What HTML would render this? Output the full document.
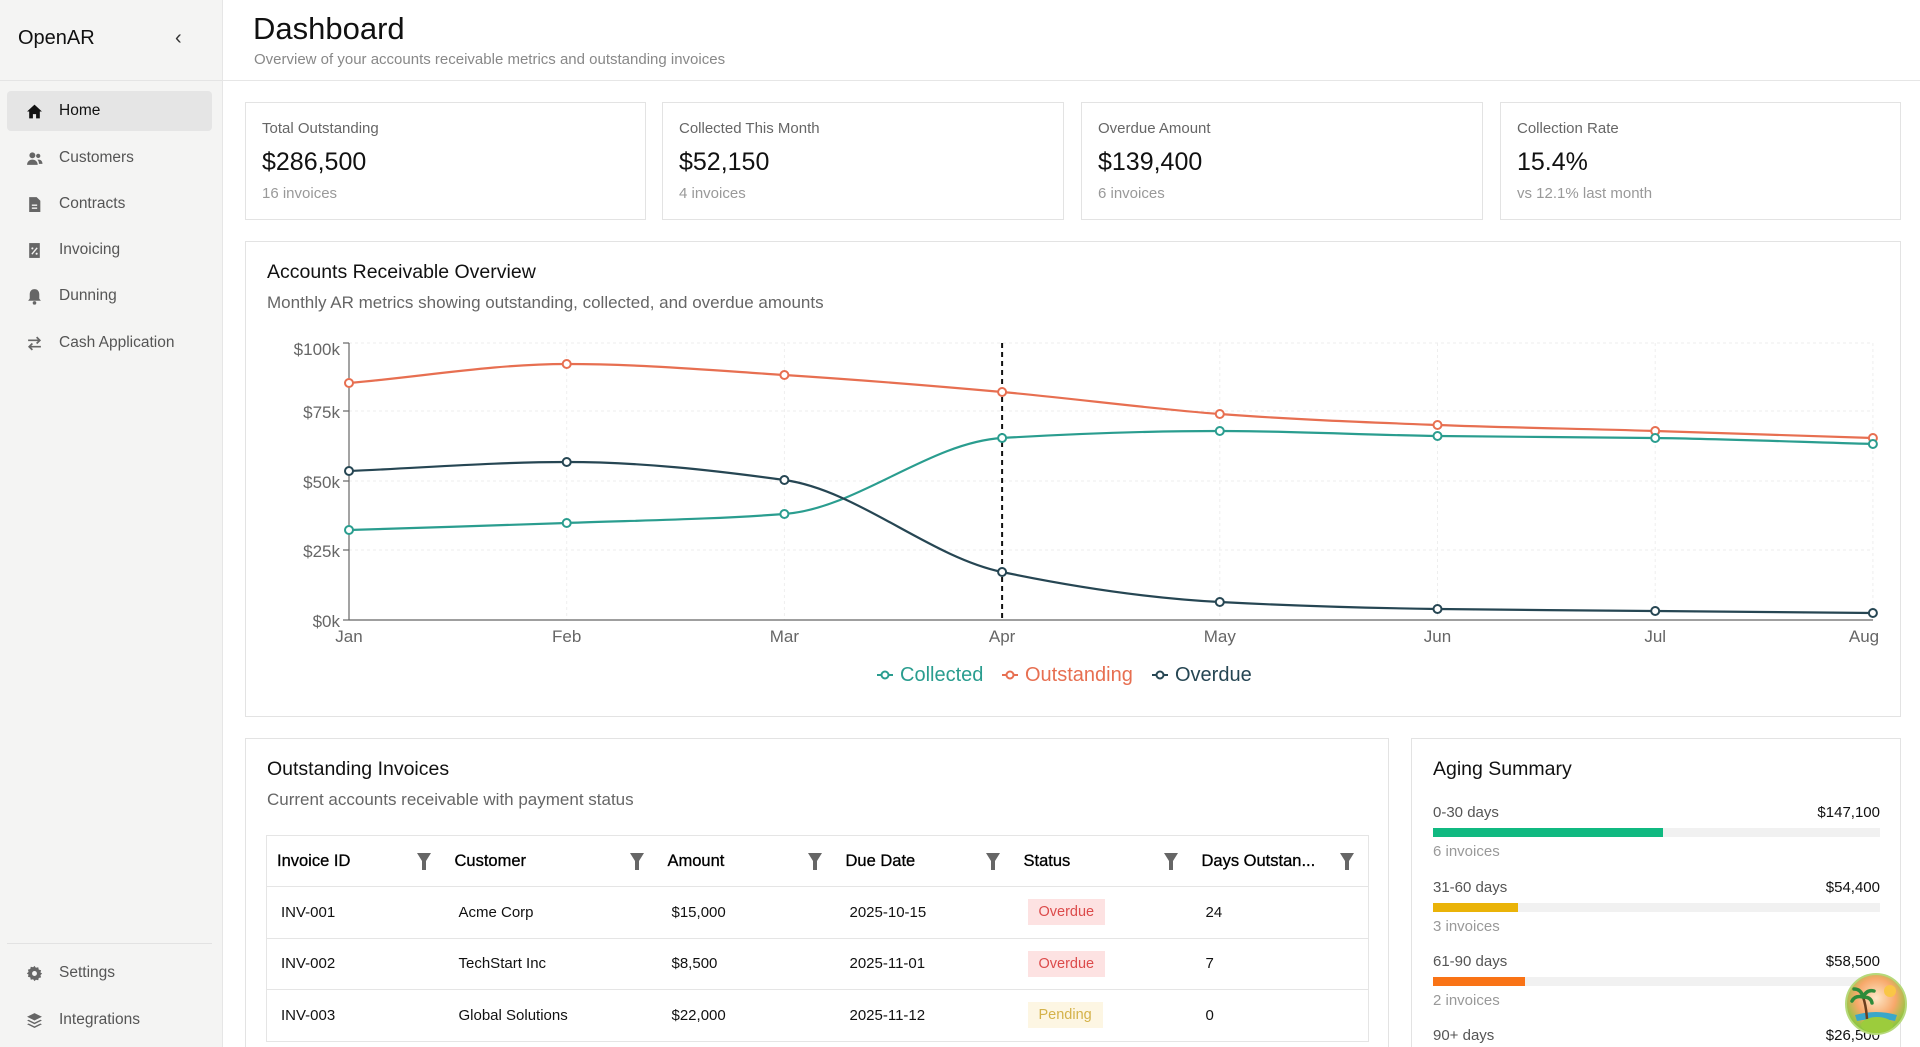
<!DOCTYPE html>
<html style="width:1920px;height:1047px;overflow:hidden"><head><meta charset="utf-8"><style>
*{box-sizing:border-box;margin:0;padding:0}
body{width:1920px;height:1047px;overflow:hidden;font-family:"Liberation Sans",sans-serif;background:#fff;color:#111;position:relative}
.sb{position:absolute;left:0;top:0;width:223px;height:1047px;background:#f4f4f3;border-right:1px solid #e6e6e6}
.logo{position:absolute;left:18px;top:27px;font-size:20px;color:#111}
.chev{position:absolute;left:175px;top:27px;font-size:20px;color:#333}
.sbline{position:absolute;left:0;right:0;top:80px;border-top:1px solid #e4e4e4}
.nav{position:absolute;left:7px;width:205px;height:40px;border-radius:4px;display:flex;align-items:center;font-size:15.5px;color:#555}
.nav.act{background:#e5e5e5;color:#111}
.nav svg{position:absolute;left:19px;width:17px;height:17px}
.nav span{position:absolute;left:52px}
.main{position:absolute;left:223px;top:0;right:0}
h1{position:absolute;left:30px;top:11px;font-size:31px;font-weight:400;color:#111}
.sub1{position:absolute;left:31px;top:51px;font-size:15px;color:#888}
.hline{position:absolute;left:223px;right:0;top:80px;border-top:1px solid #e6e6e6}
.card{position:absolute;background:#fff;border:1.5px solid #e3e3e3;overflow:hidden}
.stat .l{position:absolute;left:16px;top:17px;font-size:15px;color:#666}
.stat .v{position:absolute;left:16px;top:45px;font-size:25px;color:#111}
.stat .s{position:absolute;left:16px;top:82px;font-size:15px;color:#999}
.ct{position:absolute;left:21px;top:19px;font-size:19.5px;color:#111}
.cs{position:absolute;left:21px;top:51px;font-size:17px;color:#666}
table{position:absolute;left:20px;top:96px;width:1103px;border-collapse:collapse;border:1.5px solid #e5e5e5}
th{height:51px;text-align:left;font-weight:400;font-size:16.5px;color:#000;padding-left:10px;position:relative;border-bottom:1.5px solid #e5e5e5;-webkit-text-stroke:0.3px #000}
td{height:51.5px;font-size:15px;color:#111;padding-left:14px;border-bottom:1.5px solid #e5e5e5}
th .f{position:absolute;right:14px;top:17px;width:14px;height:17px}
.bd{display:inline-block;padding:5px 11px;font-size:14.5px}
.ov{background:#fde2e2;color:#dc4b4b}.pe{background:#fdf6e3;color:#d4b24a}
.ag{position:absolute;left:21px;width:447px}
.ag .a{font-size:15px;color:#555}.ag .b{position:absolute;right:0;top:0;font-size:15px;color:#111}
.ag .bar{margin-top:7px;height:9px;background:#f1f1f1;position:relative}
.ag .bar i{position:absolute;left:0;top:0;bottom:0}
.ag .n{margin-top:6px;font-size:15px;color:#999}
</style></head><body>
<div class="sb">
<div class="logo">OpenAR</div><div class="chev">&#8249;</div>
<div class="sbline"></div>
<div class="nav act" style="top:91px"><svg viewBox="0 0 16 16"><path d="M8 1.5L1 8h2v6.5h3.5v-4h3v4H13V8h2z" fill="#111"/></svg><span>Home</span></div>
<div class="nav" style="top:138px"><svg viewBox="0 0 16 16" fill="#666"><circle cx="6" cy="5" r="2.8"/><path d="M1 14c0-3 2-5 5-5s5 2 5 5z"/><circle cx="11.5" cy="5.5" r="2"/><path d="M12 9c2 0 3.5 1.5 3.5 4h-3.3c0-1.5-.5-3-1.5-3.8z"/></svg><span>Customers</span></div>
<div class="nav" style="top:184px"><svg viewBox="0 0 16 16" fill="#666"><path d="M3 1h7l3.5 3.5V15H3z"/><rect x="5.5" y="8" width="5" height="1.3" fill="#f4f4f3"/><rect x="5.5" y="10.8" width="5" height="1.3" fill="#f4f4f3"/></svg><span>Contracts</span></div>
<div class="nav" style="top:230px"><svg viewBox="0 0 16 16" fill="#666"><path d="M3 1h10v14H3z"/><path d="M5.5 11.5l5-6" stroke="#f4f4f3" stroke-width="1.3"/><circle cx="6" cy="6" r="1" fill="#f4f4f3"/><circle cx="10" cy="11" r="1" fill="#f4f4f3"/></svg><span>Invoicing</span></div>
<div class="nav" style="top:276px"><svg viewBox="0 0 16 16" fill="#666"><path d="M8 1c3 0 4.5 2.3 4.5 5v4l1.5 2H2l1.5-2V6C3.5 3.3 5 1 8 1z"/><circle cx="8" cy="14" r="1.7"/></svg><span>Dunning</span></div>
<div class="nav" style="top:323px"><svg viewBox="0 0 16 16" fill="none" stroke="#666" stroke-width="1.6"><path d="M2 5h11M10 2l3 3-3 3M14 11H3M6 8l-3 3 3 3"/></svg><span>Cash Application</span></div>
<div style="position:absolute;left:7px;width:205px;top:943px;border-top:1px solid #e2e2e2"></div>
<div class="nav" style="top:953px"><svg viewBox="0 0 16 16" fill="#666"><path d="M8 0.8l1.3 1.8 2.2-.5.5 2.2 2.2.6-.6 2.1L15.2 8l-1.6 1.5.6 2.1-2.2.6-.5 2.2-2.2-.5L8 15.2l-1.3-1.8-2.2.5-.5-2.2-2.2-.6.6-2.1L.8 8l1.6-1.5-.6-2.1 2.2-.6.5-2.2 2.2.5z"/><circle cx="8" cy="8" r="2.3" fill="#f4f4f3"/></svg><span>Settings</span></div>
<div class="nav" style="top:1000px"><svg viewBox="0 0 16 16" fill="#666"><path d="M8 1l7 3.5L8 8 1 4.5z"/><path d="M2.5 7.3L8 10l5.5-2.7L15 8l-7 3.5L1 8z"/><path d="M2.5 10.8L8 13.5l5.5-2.7L15 11.5 8 15l-7-3.5z"/></svg><span>Integrations</span></div>
</div>
<div class="main"><h1>Dashboard</h1><div class="sub1">Overview of your accounts receivable metrics and outstanding invoices</div></div>
<div class="hline"></div>

<div class="card stat" style="left:245px;top:102px;width:401px;height:118px"><div class="l">Total Outstanding</div><div class="v">$286,500</div><div class="s">16 invoices</div></div>
<div class="card stat" style="left:662px;top:102px;width:402px;height:118px"><div class="l">Collected This Month</div><div class="v">$52,150</div><div class="s">4 invoices</div></div>
<div class="card stat" style="left:1081px;top:102px;width:402px;height:118px"><div class="l">Overdue Amount</div><div class="v">$139,400</div><div class="s">6 invoices</div></div>
<div class="card stat" style="left:1500px;top:102px;width:401px;height:118px"><div class="l">Collection Rate</div><div class="v">15.4%</div><div class="s">vs 12.1% last month</div></div>

<div class="card" style="left:245px;top:241px;width:1656px;height:476px"><div class="ct">Accounts Receivable Overview</div><div class="cs">Monthly AR metrics showing outstanding, collected, and overdue amounts</div></div>
<svg style="position:absolute;left:0;top:0" width="1920" height="760" font-family="Liberation Sans, sans-serif">
<g stroke="#eee" stroke-dasharray="3 3"><line x1="349" x2="1873" y1="343" y2="343"/><line x1="349" x2="1873" y1="411" y2="411"/><line x1="349" x2="1873" y1="481" y2="481"/><line x1="349" x2="1873" y1="550" y2="550"/>
<line x1="566.7" x2="566.7" y1="343" y2="620"/><line x1="784.4" x2="784.4" y1="343" y2="620"/><line x1="1219.8" x2="1219.8" y1="343" y2="620"/><line x1="1437.5" x2="1437.5" y1="343" y2="620"/><line x1="1655.2" x2="1655.2" y1="343" y2="620"/><line x1="1872.9" x2="1872.9" y1="343" y2="620"/></g>
<g stroke="#666" stroke-width="1.2"><line x1="349" y1="343" x2="349" y2="620"/><line x1="349" y1="620" x2="1873" y2="620"/>
<line x1="343" x2="349" y1="343" y2="343"/><line x1="343" x2="349" y1="411" y2="411"/><line x1="343" x2="349" y1="481" y2="481"/><line x1="343" x2="349" y1="550" y2="550"/><line x1="343" x2="349" y1="620" y2="620"/></g>
<g fill="#666" font-size="17" text-anchor="end"><text x="340" y="355">$100k</text><text x="340" y="418">$75k</text><text x="340" y="488">$50k</text><text x="340" y="557">$25k</text><text x="340" y="627">$0k</text></g>
<g fill="#666" font-size="17" text-anchor="middle"><text x="349" y="642">Jan</text><text x="566.7" y="642">Feb</text><text x="784.4" y="642">Mar</text><text x="1002.1" y="642">Apr</text><text x="1219.8" y="642">May</text><text x="1437.5" y="642">Jun</text><text x="1655.2" y="642">Jul</text><text x="1864" y="642">Aug</text></g>
<line x1="1002.1" y1="343" x2="1002.1" y2="620" stroke="#111" stroke-width="2" stroke-dasharray="5 4"/>
<g fill="none" stroke-width="2.2">
<path stroke="#e76f51" d="M349,383 C421.6,376.7 494.1,364 566.7,364 C639.3,364 711.8,370.3 784.4,375 C857,379.7 929.5,385.5 1002.1,392 C1074.7,398.5 1147.2,408.5 1219.8,414 C1292.4,419.5 1364.9,422.2 1437.5,425 C1510.1,427.8 1582.6,428.7 1655.2,431 C1727.8,433.3 1800.3,435.7 1872.9,438"/>
<path stroke="#2a9d8f" d="M349,530 C421.6,527.7 494.1,525.6 566.7,523 C639.3,520.4 711.8,519.4 784.4,514 C857,508.6 929.5,442.3 1002.1,438 C1074.7,433.7 1147.2,431 1219.8,431 C1292.4,431 1364.9,435 1437.5,436 C1510.1,437 1582.6,437 1655.2,438 C1727.8,439 1800.3,442 1872.9,444"/>
<path stroke="#264653" d="M349,471 C421.6,468 494.1,462 566.7,462 C639.3,462 711.8,470 784.4,480 C857,490 929.5,556.9 1002.1,572 C1074.7,587.1 1147.2,598.2 1219.8,602 C1292.4,605.8 1364.9,608 1437.5,609 C1510.1,610 1582.6,610.3 1655.2,611 C1727.8,611.7 1800.3,612.3 1872.9,613"/>
</g>
<g fill="#fff" stroke-width="2">
<g stroke="#e76f51"><circle cx="349" cy="383" r="4"/><circle cx="566.7" cy="364" r="4"/><circle cx="784.4" cy="375" r="4"/><circle cx="1002.1" cy="392" r="4"/><circle cx="1219.8" cy="414" r="4"/><circle cx="1437.5" cy="425" r="4"/><circle cx="1655.2" cy="431" r="4"/><circle cx="1872.9" cy="438" r="4"/></g>
<g stroke="#2a9d8f"><circle cx="349" cy="530" r="4"/><circle cx="566.7" cy="523" r="4"/><circle cx="784.4" cy="514" r="4"/><circle cx="1002.1" cy="438" r="4"/><circle cx="1219.8" cy="431" r="4"/><circle cx="1437.5" cy="436" r="4"/><circle cx="1655.2" cy="438" r="4"/><circle cx="1872.9" cy="444" r="4"/></g>
<g stroke="#264653"><circle cx="349" cy="471" r="4"/><circle cx="566.7" cy="462" r="4"/><circle cx="784.4" cy="480" r="4"/><circle cx="1002.1" cy="572" r="4"/><circle cx="1219.8" cy="602" r="4"/><circle cx="1437.5" cy="609" r="4"/><circle cx="1655.2" cy="611" r="4"/><circle cx="1872.9" cy="613" r="4"/></g>
</g>
<g font-size="20">
<line x1="877" x2="893" y1="675" y2="675" stroke="#2a9d8f" stroke-width="2"/><circle cx="885" cy="675" r="3.5" fill="#fff" stroke="#2a9d8f" stroke-width="2"/><text x="900" y="681" fill="#2a9d8f">Collected</text>
<line x1="1002" x2="1018" y1="675" y2="675" stroke="#e76f51" stroke-width="2"/><circle cx="1010" cy="675" r="3.5" fill="#fff" stroke="#e76f51" stroke-width="2"/><text x="1025" y="681" fill="#e76f51">Outstanding</text>
<line x1="1152" x2="1168" y1="675" y2="675" stroke="#264653" stroke-width="2"/><circle cx="1160" cy="675" r="3.5" fill="#fff" stroke="#264653" stroke-width="2"/><text x="1175" y="681" fill="#264653">Overdue</text>
</g>
</svg>

<div class="card" style="left:245px;top:738px;width:1144px;height:312px"><div class="ct">Outstanding Invoices</div><div class="cs">Current accounts receivable with payment status</div>
<table>
<tr><th style="width:178px">Invoice ID<svg class="f" viewBox="0 0 14 17"><path d="M0 0h14l-5 8v9H5V8z" fill="#666"/></svg></th><th style="width:213px">Customer<svg class="f" viewBox="0 0 14 17"><path d="M0 0h14l-5 8v9H5V8z" fill="#666"/></svg></th><th style="width:178px">Amount<svg class="f" viewBox="0 0 14 17"><path d="M0 0h14l-5 8v9H5V8z" fill="#666"/></svg></th><th style="width:178px">Due Date<svg class="f" viewBox="0 0 14 17"><path d="M0 0h14l-5 8v9H5V8z" fill="#666"/></svg></th><th style="width:178px">Status<svg class="f" viewBox="0 0 14 17"><path d="M0 0h14l-5 8v9H5V8z" fill="#666"/></svg></th><th>Days Outstan...<svg class="f" viewBox="0 0 14 17"><path d="M0 0h14l-5 8v9H5V8z" fill="#666"/></svg></th></tr>
<tr><td>INV-001</td><td>Acme Corp</td><td>$15,000</td><td>2025-10-15</td><td><span class="bd ov">Overdue</span></td><td>24</td></tr>
<tr><td>INV-002</td><td>TechStart Inc</td><td>$8,500</td><td>2025-11-01</td><td><span class="bd ov">Overdue</span></td><td>7</td></tr>
<tr><td>INV-003</td><td>Global Solutions</td><td>$22,000</td><td>2025-11-12</td><td><span class="bd pe">Pending</span></td><td>0</td></tr>
</table></div>

<div class="card" style="left:1411px;top:738px;width:490px;height:312px"><div class="ct">Aging Summary</div>
<div class="ag" style="top:65px"><div class="a">0-30 days</div><div class="b">$147,100</div><div class="bar"><i style="width:230px;background:#10b981"></i></div><div class="n">6 invoices</div></div>
<div class="ag" style="top:140px"><div class="a">31-60 days</div><div class="b">$54,400</div><div class="bar"><i style="width:85px;background:#eab308"></i></div><div class="n">3 invoices</div></div>
<div class="ag" style="top:214px"><div class="a">61-90 days</div><div class="b">$58,500</div><div class="bar"><i style="width:92px;background:#f97316"></i></div><div class="n">2 invoices</div></div>
<div class="ag" style="top:288px"><div class="a">90+ days</div><div class="b">$26,500</div></div>
</div>
<svg style="position:absolute;left:1845px;top:973px" width="62" height="62" viewBox="0 0 62 62">
<defs><radialGradient id="g" cx="50%" cy="40%" r="55%"><stop offset="0" stop-color="#fde7c8"/><stop offset=".6" stop-color="#f7a86a"/><stop offset="1" stop-color="#8dc63f"/></radialGradient></defs>
<circle cx="31" cy="31" r="30" fill="url(#g)" stroke="#b6d97a" stroke-width="2"/>
<circle cx="45" cy="18" r="6" fill="#f9c646"/>
<path d="M10 42 Q31 36 52 42 L50 48 Q31 44 12 48z" fill="#3aa7c9"/>
<ellipse cx="32" cy="52" rx="16" ry="8" fill="#9ccc3c"/>
<path d="M22 46 Q21 32 18 24" stroke="#6b3e1e" stroke-width="2.5" fill="none"/>
<path d="M18 24 q-8 -2 -11 4 M18 24 q-2 -8 -9 -8 M18 24 q4 -8 11 -6 M18 24 q8 0 9 6" stroke="#2e8b3a" stroke-width="3.5" fill="none" stroke-linecap="round"/>
</svg>
</body></html>
